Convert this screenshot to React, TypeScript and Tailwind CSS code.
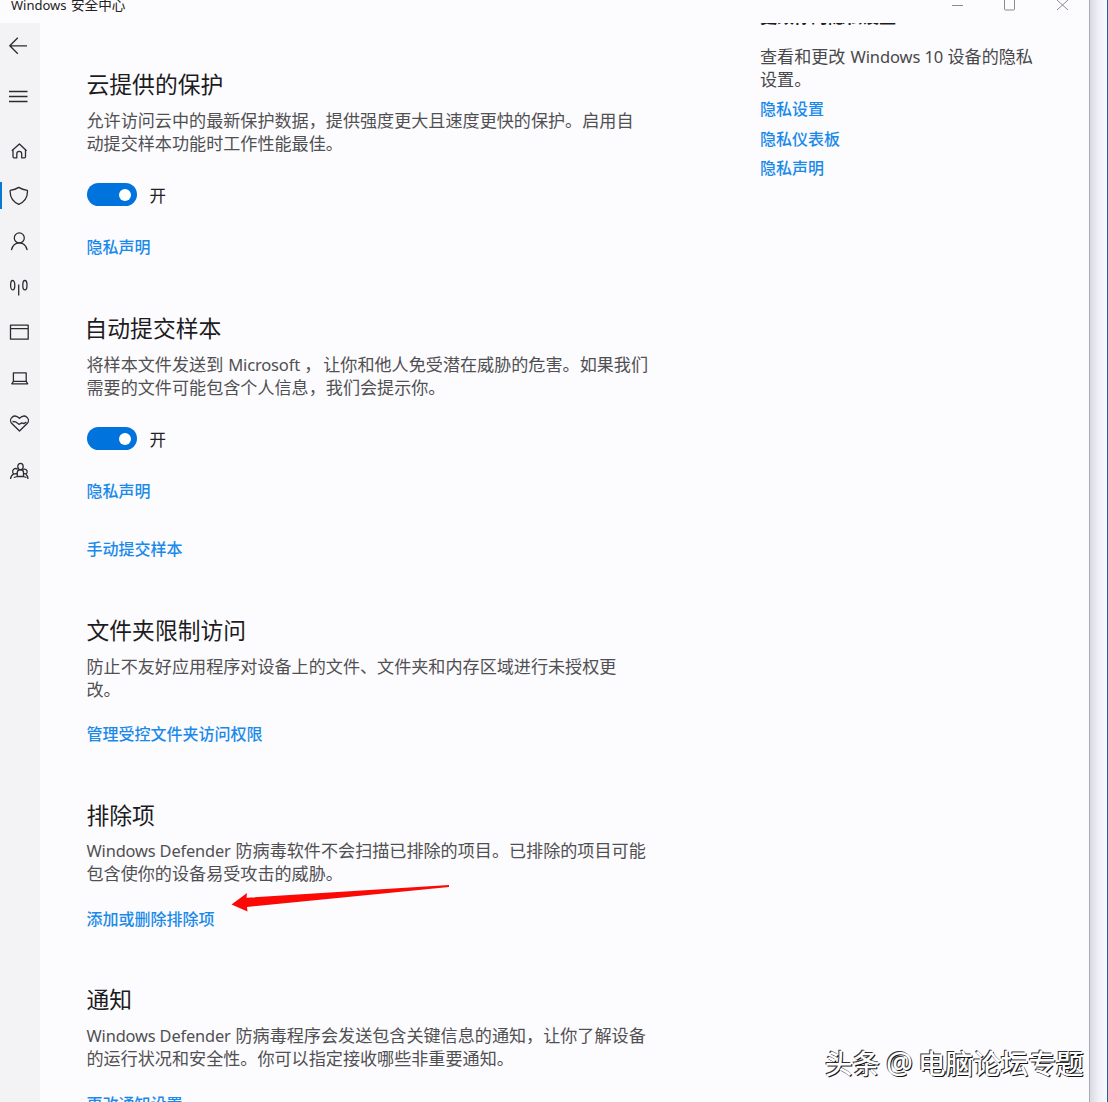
import React from 'react';

type Part = string | { latin: string; width: string };

const LINK = 'h-[22px] whitespace-nowrap text-[16px] leading-[22px] font-medium text-[#1a8aea]';
const DEFENDER: Part = { latin: 'Windows Defender', width: 'w-[149px] text-[16.4px] tracking-[-0.15px]' };

function Line({ parts }: { parts: Part[] }) {
  return (
    <div className="flex h-[23px] whitespace-nowrap">
      {parts.map((p, i) =>
        typeof p === 'string' ? (
          <span key={i}>{p}</span>
        ) : (
          <span key={i} className={p.width}>{p.latin}</span>
        ),
      )}
    </div>
  );
}

function Body({ lines }: { lines: Part[][] }) {
  return (
    <div className="pt-[7.5px] pb-[0.5px] text-[17.1px] leading-[23px] text-[#505052]">
      {lines.map((l, i) => (
        <Line key={i} parts={l} />
      ))}
    </div>
  );
}

function Heading({ children }: { children: React.ReactNode }) {
  return <h2 className="h-[31px] whitespace-nowrap text-[22.8px] leading-[30px] text-[#1c1c1e]">{children}</h2>;
}

function Toggle() {
  return (
    <div className="mt-7 flex h-[23px] items-center">
      <div className="flex h-[23px] w-[50px] items-center justify-end rounded-full bg-[#0073dc] pr-[6px]">
        <div className="size-[12px] rounded-full bg-white" />
      </div>
      <span className="ml-[13px] mt-[2px] text-[16.5px] leading-[23px] text-[#222]">开</span>
    </div>
  );
}

function Icon({ top, children }: { top: string; children: React.ReactNode }) {
  return (
    <svg
      className={`${top} ml-[9px] size-[20px] shrink-0`}
      viewBox="0 0 20 20"
      fill="none"
      stroke="#2c2c30"
      strokeWidth="1.3"
      strokeLinejoin="round"
    >
      {children}
    </svg>
  );
}

function Sidebar() {
  return (
    <nav className="mt-[23px] flex w-10 shrink-0 flex-col bg-[#f3f2f5]">
      <Icon top="mt-[13px]"><path d="M18 9.8H.8M8.8 1.8.8 9.8l8 8" /></Icon>
      <Icon top="mt-[31px]"><path d="M0 4.5h18.5M0 9.5h18.5M0 14.5h18.5" /></Icon>
      <Icon top="mt-[34px]"><path d="M2.8 9.8 10.4 3l7.2 6.8M4 8.9v6.7c0 .8.3 1.200 1 1.200h2.800v-4c0-3.300 4.900-3.300 4.900 0v4h2.800c.7 0 1-.4 1-1.200V8.900" /></Icon>
      <div className="mt-[21px] flex h-[27px] items-center">
        <div className="h-[27px] w-[2px] bg-[#0b78d0]" />
        <svg className="ml-[7px] size-[20px]" viewBox="0 0 20 20" fill="none" stroke="#2c2c30" strokeWidth="1.3" strokeLinejoin="round">
          <path d="M9.800 1.400C7.200 3.200 4.200 4 1.200 4.300c-.5 6.500 2.600 11.300 8.600 14.100 6-2.800 9.100-7.600 8.600-14.100-3-.3-6-1.100-8.600-2.900Z" />
        </svg>
      </div>
      <Icon top="mt-[22px]"><circle cx="10.300" cy="6.900" r="5" /><path d="M2.400 19.200c1-4.300 3.800-7.300 7.900-7.300s6.900 3 7.900 7.300" /></Icon>
      <Icon top="mt-[26px]"><ellipse cx="3.700" cy="8.200" rx="2.100" ry="4.700" /><ellipse cx="15.900" cy="8.200" rx="2.100" ry="4.700" /><path d="M9.700 7.500v11" /></Icon>
      <Icon top="mt-[25px]"><path d="M1.500 3.200h17.700v14H1.500zM1.500 6.700h17.700" /></Icon>
      <Icon top="mt-[26px]"><path d="M4.400 4.800h12.800v8.500H4.400zM2.800 15.800h15.900l-1.500-2.500H4.400z" /></Icon>
      <Icon top="mt-[25px]"><path d="M10.500 18 2.600 10.300C-.7 6.300 4.700-.3 10.500 5.300c5.800-5.600 11.200 1 7.900 5zM3.500 8.500l3 .3 3.400 2.500 3-1.500 2 .8 2.500-1.600" /></Icon>
      <Icon top="mt-[27.5px]"><ellipse cx="11.500" cy="5.500" rx="2.700" ry="3.200" /><path d="M8.300 15.500v-4c0-3.700 6.200-3.700 6.200 0v4zM8.600 8.200c-2.500-1.700-5.700.2-4.800 3.500.4 1.200 2.700 1.600 4.400.4M14.200 8.500c2.300-1 4.600.8 3.800 3.200-.5 1.300-2.100 1.500-3.500.6M1.500 18c.3-2.500 1.300-4.300 3.300-5.200M4.800 16.500l3.500-1M19 18c-.2-2.500-.9-4.100-2.500-5.300M14.500 15.500l3 1" /></Icon>
    </nav>
  );
}

export default function App() {
  return (
    <div className="flex h-[1102px] w-[1108px] overflow-hidden bg-[#eef0f6] font-['Noto_Sans','Noto_Sans_CJK_SC',sans-serif]">
      <div className="relative flex w-[1090px] shrink-0 flex-col border-r border-[#a8aab2] bg-[#fcfbfe]">
        <div className="flex min-h-0 flex-1">
          <Sidebar />
          <main className="ml-[46.500px] w-[673.500px] shrink-0 pt-[70px]">
            <Heading>云提供的保护</Heading>
            <Body lines={[['允许访问云中的最新保护数据，提供强度更大且速度更快的保护。启用自'], ['动提交样本功能时工作性能最佳。']]} />
            <Toggle />
            <div className={`${LINK} mt-[30px]`}>隐私声明</div>

            <div className="-ml-[2px] mt-14"><Heading>自动提交样本</Heading></div>
            <Body
              lines={[
                ['将样本文件发送到', { latin: 'Microsoft', width: 'ml-[5px] w-[73px] text-[16.6px] tracking-[-0.2px]' }, { latin: '，', width: 'w-[22px] pl-[3px]' }, '让你和他人免受潜在威胁的危害。如果我们'],
                ['需要的文件可能包含个人信息，我们会提示你。'],
              ]}
            />
            <Toggle />
            <div className={`${LINK} mt-[30px]`}>隐私声明</div>
            <div className={`${LINK} mt-9`}>手动提交样本</div>

            <div className="mt-14"><Heading>文件夹限制访问</Heading></div>
            <Body lines={[['防止不友好应用程序对设备上的文件、文件夹和内存区域进行未授权更'], ['改。']]} />
            <div className={`${LINK} mt-[22px]`}>管理受控文件夹访问权限</div>

            <div className="mt-[55.500px]"><Heading>排除项</Heading></div>
            <Body
              lines={[
                [DEFENDER, '防病毒软件不会扫描已排除的项目。已排除的项目可能'],
                ['包含使你的设备易受攻击的威胁。'],
              ]}
            />
            <div className={`${LINK} mt-[22px]`}>添加或删除排除项</div>

            <div className="mt-[55.500px]"><Heading>通知</Heading></div>
            <Body
              lines={[
                [DEFENDER, '防病毒程序会发送包含关键信息的通知，让你了解设备'],
                ['的运行状况和安全性。你可以指定接收哪些非重要通知。'],
              ]}
            />
            <div className={`${LINK} mt-[23px]`}>更改通知设置</div>
          </main>
          <aside className="w-[320px]">
            <div className="h-[23px] pl-[192px]">
              <svg className="h-[14px] w-[118px]" viewBox="0 0 118 14" fill="none" stroke="#8a8a90">
                <path d="M0 5.500h11M105 0l11 10M116 0l-11 10" />
                <rect x="52.500" y="-2" width="10" height="12" rx="1" />
              </svg>
            </div>
            <div className="flex h-[6px] items-end overflow-hidden whitespace-nowrap text-[17px] font-bold leading-[25px] text-[#1c1c1e]">
              更改你的隐私设置
            </div>
            <div className="mt-[15.500px] text-[17.100px] leading-[23px] text-[#48484a]">
              <Line parts={['查看和更改', { latin: 'Windows 10', width: 'ml-[5px] w-[97px] text-[16.5px] tracking-[-0.1px]' }, '设备的隐私']} />
              <Line parts={['设置。']} />
            </div>
            <div className={`${LINK} mt-[7px]`}>隐私设置</div>
            <div className={`${LINK} mt-[8px]`}>隐私仪表板</div>
            <div className={`${LINK} mt-[7px]`}>隐私声明</div>
          </aside>
        </div>
        <div className="absolute left-[11px] top-[-5px] flex h-5 whitespace-nowrap text-[13.600px] leading-5 text-[#222]">
          <span className="w-[60px] text-[13px]">Windows</span>
          <span>安全中心</span>
        </div>
        <svg className="absolute left-[230px] top-[880px] h-[34px] w-[222px]" viewBox="230 880 222 34" fill="#fb0a05">
          <path d="M231.500 904.500 247 893l-.5 4.800L449 885v2l-202 20 .5 4.500Z" />
        </svg>
        <div className="absolute left-[825px] top-[1043px] flex h-10 whitespace-nowrap text-[27.600px] font-medium leading-10 text-white [text-shadow:1px_1px_0_#111,-1px_-1px_0_#333]">
          <span className="w-[61px]">头条</span>
          <span className="w-[32px] text-[30px]">@</span>
          <span>电脑论坛专题</span>
        </div>
      </div>
      <div className="flex-1 bg-linear-to-r from-[#d8dbe3] via-[#eff1f7] to-[#f8f9fd]" />
      <div className="w-px bg-[#24609a]" />
    </div>
  );
}
